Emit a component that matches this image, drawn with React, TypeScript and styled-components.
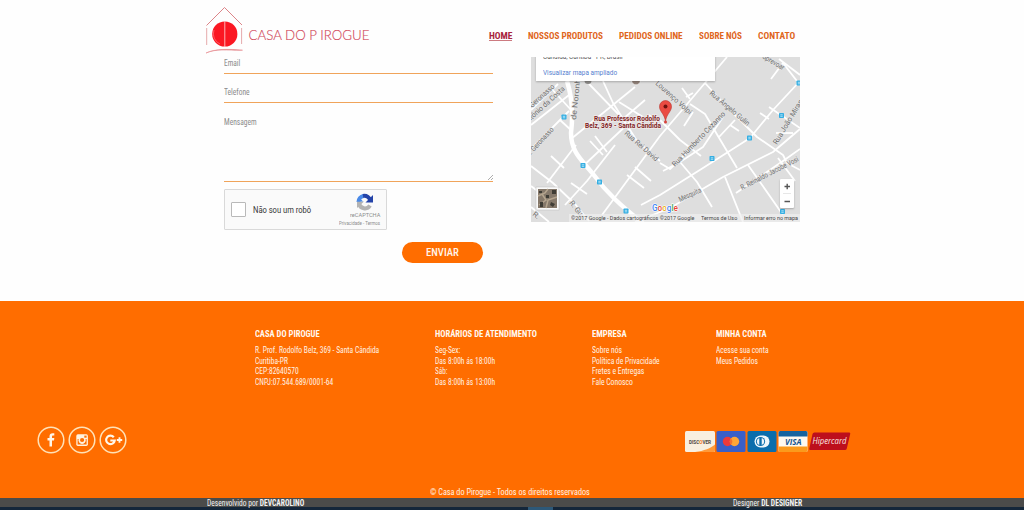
import React, { useLayoutEffect, useRef, useState } from "react";
import styled, { createGlobalStyle } from "styled-components";

const GlobalStyle = createGlobalStyle`
  * { box-sizing: border-box; }
  body { margin: 0; background: #fefefe; overflow: hidden; }
  body, button, input, textarea { font-family: "Roboto Condensed", Roboto, "Liberation Sans", sans-serif; }
  h3, p, ul { margin: 0; padding: 0; list-style: none; }
  a { color: inherit; text-decoration: none; }
  svg { display: block; }
`;

const FitBox = styled.span<{ $w: number }>`
  display: inline-block;
  width: ${(p) => p.$w}px;
  white-space: nowrap;
  vertical-align: top;
`;
const FitInner = styled.span`
  display: inline-block;
  transform-origin: 0 50%;
`;

/* Condenses a line of text to the given width. */
function Fit({ w, children }: { w: number; children: React.ReactNode }) {
  const ref = useRef<HTMLSpanElement>(null);
  const [scale, setScale] = useState(1);
  useLayoutEffect(() => {
    if (ref.current) setScale(w / ref.current.offsetWidth);
  }, [w]);
  return (
    <FitBox $w={w}>
      <FitInner ref={ref} style={{ transform: `scaleX(${scale})` }}>
        {children}
      </FitInner>
    </FitBox>
  );
}

const Page = styled.div`
  width: 1024px;
  height: 510px;
  display: flex;
  flex-direction: column;
  overflow: hidden;
`;

const Header = styled.header`
  height: 57px;
  flex: none;
  display: flex;
  padding-left: 204px;
`;
const Logo = styled.a`
  width: 285px;
  svg { overflow: visible; }
`;
const Nav = styled.nav`
  display: flex;
  gap: 16px;
  padding-top: 30px;
  font-size: 9.5px;
  font-weight: 700;
  line-height: 12px;
`;
const NavLink = styled.a<{ $active?: boolean }>`
  height: 11px;
  color: ${(p) => (p.$active ? "#a8243c" : "#e0661c")};
  border-bottom: 1px solid ${(p) => (p.$active ? "#cc7a80" : "transparent")};
`;

const Contact = styled.main`
  height: 244px;
  flex: none;
  display: flex;
  gap: 38px;
  padding-left: 224px;
`;
const Form = styled.form`
  width: 269px;
  display: flex;
  flex-direction: column;
  font-size: 8.4px;
  line-height: 10px;
  color: #8b8b8b;
`;
const Field = styled.label<{ $h: number; $top: number }>`
  display: flex;
  justify-content: space-between;
  height: ${(p) => p.$h}px;
  padding-top: ${(p) => p.$top}px;
  border-bottom: 1px solid #f0a45a;
`;
const Grip = styled.svg`
  align-self: flex-end;
  margin-bottom: 1px;
`;
const Captcha = styled.div`
  width: 163px;
  height: 41px;
  margin-top: 7px;
  padding-left: 6px;
  display: flex;
  align-items: center;
  background: #fafafa;
  border: 1px solid #d9d9d9;
  border-radius: 1px;
`;
const CheckBox = styled.span`
  width: 15px;
  height: 15px;
  margin: -1px 7px 0 0;
  border: 1px solid #b9b9b9;
  border-radius: 1px;
  background: #fff;
`;
const CaptchaLabel = styled.span`
  font-family: Roboto, sans-serif;
  font-size: 9px;
  color: #333;
`;
const CaptchaBrand = styled.div`
  flex: 1;
  display: flex;
  flex-direction: column;
  align-items: flex-end;
  padding: 1px 6px 0 0;
  font-family: Roboto, sans-serif;
  font-size: 5.8px;
  line-height: 8px;
  color: #8c8c8c;
  svg { margin-right: 6px; }
`;
const Submit = styled.button`
  width: 81px;
  height: 21px;
  margin: 12px 0 0 178px;
  border: 0;
  border-radius: 11px;
  background: #ff6d00;
  color: #fff4ea;
  font-size: 11px;
  line-height: 22px;
  font-weight: 500;
  padding: 0;
`;

const MapBox = styled.div`
  position: relative;
  width: 269px;
  height: 165px;
  overflow: hidden;
  background: #dedede;
  font-family: Roboto, sans-serif;
`;
const MapCard = styled.div`
  position: absolute;
  left: 5px;
  top: -6px;
  width: 179px;
  height: 30px;
  padding: 1px 0 0 7px;
  background: #fff;
  box-shadow: 0 1px 2px rgba(0, 0, 0, 0.25);
  font-size: 7.4px;
  line-height: 10px;
  color: #555;
`;
const MapLink = styled.a`
  display: block;
  margin-top: 6px;
  color: #5580cf;
`;
const ZoomControl = styled.div`
  position: absolute;
  left: 249px;
  top: 122px;
  width: 14px;
  height: 29px;
  background: #fff;
  border-radius: 1px;
  box-shadow: 0 1px 2px rgba(0, 0, 0, 0.25);
`;
const MapCredits = styled.div`
  position: absolute;
  left: 38px;
  right: 0;
  bottom: 0;
  height: 8px;
  padding-left: 2px;
  display: flex;
  gap: 7px;
  background: rgba(240, 240, 240, 0.7);
  font-size: 6px;
  line-height: 8px;
  color: #444;
`;

const Footer = styled.footer`
  height: 197px;
  flex: none;
  display: flex;
  flex-direction: column;
  background: #ff6d00;
  color: #fff3e6;
`;
const Columns = styled.div`
  display: flex;
  height: 129px;
  padding: 27px 0 0 255px;
`;
const Column = styled.section<{ $w: number }>`
  width: ${(p) => p.$w}px;
  font-size: 8.4px;
  line-height: 10.7px;
  h3 { font-size: 9.2px; line-height: 11px; font-weight: 700; margin-bottom: 6px; color: #fff8ef; }
  li { height: 10.7px; }
`;
const Brands = styled.div`
  display: flex;
  justify-content: space-between;
  padding: 0 173px 0 37px;
`;
const Social = styled.div`
  display: flex;
  gap: 3px;
  margin-top: -4px;
`;
const Cards = styled.div`
  display: flex;
  gap: 1px;
  height: 21px;
  margin-top: 1px;
`;
const Copyright = styled.p`
  margin: 33px 0 0 430px;
  font-size: 8.4px;
  line-height: 11px;
`;
const CreditBar = styled.div`
  height: 9px;
  flex: none;
  display: flex;
  gap: 429px;
  padding-left: 207px;
  background: #4b4b4a;
  color: #f2f2f2;
  font-size: 8.4px;
  line-height: 10px;
`;
const BottomEdge = styled.div`
  height: 3px;
  background: linear-gradient(90deg, #14263a 0 528px, #2d5878 528px 553px, #14263a 553px);
`;

const nav: [string, number][] = [
  ["HOME", 23],
  ["NOSSOS PRODUTOS", 75],
  ["PEDIDOS ONLINE", 64],
  ["SOBRE NÓS", 43],
  ["CONTATO", 37],
];

const columns: { title: [string, number]; w: number; items: [string, number][] }[] = [
  {
    title: ["CASA DO PIROGUE", 65],
    w: 180,
    items: [
      ["R. Prof. Rodolfo Belz, 369 - Santa Cândida", 124],
      ["Curitiba-PR", 33],
      ["CEP:82640570", 44],
      ["CNPJ:07.544.689/0001-64", 78],
    ],
  },
  {
    title: ["HORÁRIOS DE ATENDIMENTO", 102],
    w: 157,
    items: [
      ["Seg-Sex:", 25],
      ["Das 8:00h ás 18:00h", 60],
      ["Sáb:", 12],
      ["Das 8:00h ás 13:00h", 60],
    ],
  },
  {
    title: ["EMPRESA", 35],
    w: 124,
    items: [
      ["Sobre nós", 30],
      ["Política de Privacidade", 68],
      ["Fretes e Entregas", 52],
      ["Fale Conosco", 41],
    ],
  },
  {
    title: ["MINHA CONTA", 51],
    w: 80,
    items: [
      ["Acesse sua conta", 53],
      ["Meus Pedidos", 42],
    ],
  },
];

const streets = [
  "M0 53L27 27", "M0 68L38 38", "M19 30L41 54", "M0 92L29 63L41 74", "M29 63L38 54",
  "M0 109L22 126L44 147L58 164", "M16 126L45 88", "M20 99L33 111", "M40 82L104 30",
  "M58 27L92 62L101 79", "M72 24L82 46L106 84L129 104", "M88 45L112 60", "M92 62L114 43",
  "M0 129L16 141", "M40 126L56 137M34 148L56 124L84 88", "M59 84L72 98M64 79L76 95", "M50 111L100 64",
  "M196 0L174 26L129 79L71 158", "M174 26L196 50L214 68L226 80L242 91L252 98L256 106L269 113",
  "M151 31L159 42M155 40L162 36", "M129 63L149 83L170 99", "M128 68L118 58",
  "M159 47L174 57L184 74L206 111", "M192 60L172 90L149 105L132 114",
  "M0 150L18 165", "M96 118L113 131M104 110L120 124", "M129 106L139 112L170 82",
  "M110 148L129 138L172 111L219 81L242 53L269 24", "M104 165L139 151L192 120L242 95L269 72",
  "M149 105L166 125L181 150", "M194 120L212 165", "M217 108L229 125L252 158", "M205 136L252 104L269 92",
  "M238 50L269 71", "M229 56L238 62", "M240 22L252 6L269 28", "M248 2L269 18",
  "M247 101L264 124", "M245 76L262 76", "M199 68L208 74", "M153 69L162 55", "M188 80L204 63",
];

const streetNames: [string, number, number, number, number][] = [
  ["Geronasso", 1, 51, -42, 31],
  ["Antônio da Costa", -5, 68, -42, 53],
  ["de Noronha", 45, 63, -84, 46],
  ["R. Geronasso", -2, 100, -47, 37],
  ["Lourenço Volpi", 124, 27, 42, 46],
  ["Rua Ângelo Gulin", 178, 37, 40, 50],
  ["Sprevoar", 231, 1, 31, 24],
  ["Rua Rei David", 93, 77, 41, 42],
  ["Rua Humberto Cezanno", 144, 110, -46, 73],
  ["R. Reinaldo Jacobe Vosi", 211, 133, -27, 64],
  ["Rua João Mirand", 246, 88, -59, 55],
  ["Mesquita", 149, 145, -25, 24],
  ["R. Gu", 38, 146, 52, 17],
  ["R.", 1, 158, 38, 7],
];

const stops = [[33, 60], [52, 108.5], [68.5, 125], [95, 154], [181, 101.5], [218.5, 81], [250.5, 58.5], [268, 26], [251.5, 154.5]];

function MapPanel() {
  return (
    <MapBox>
      <svg width="269" height="165" viewBox="0 0 269 165">
        <rect width="269" height="165" fill="#dedede" />
        <g fill="none" stroke="#fff" strokeWidth="1.8" strokeLinejoin="round">
          {streets.map((d) => <path key={d} d={d} />)}
          <path strokeWidth="4.5" d="M36 24C41 40 42 60 40 76C40 96 52 104 62 117C76 136 90 149 112 166" />
        </g>
        <g fontSize="7.4" fill="#6f6f6f" stroke="#e4e4e4" strokeWidth="1.4" paintOrder="stroke">
          {streetNames.map(([t, x, y, r, w]) => (
            <text key={t} textLength={w} lengthAdjust="spacingAndGlyphs" transform={`translate(${x} ${y}) rotate(${r})`}>{t}</text>
          ))}
        </g>
        {stops.map(([x, y]) => (
          <g key={`${x}-${y}`}>
            <rect x={x - 2.5} y={y - 2.5} width="5" height="5" rx=".7" fill="#35aee2" />
            <path d={`M${x - 1.2} ${y - 0.7}h2.4M${x - 1.2} ${y + 0.8}h2.4`} stroke="#c8edfb" strokeWidth=".8" />
          </g>
        ))}
        <circle cx="57" cy="23.5" r="3.5" fill="#8d8b89" />
        <circle cx="105" cy="23.5" r="4.5" fill="#92837a" stroke="#eee" />
        <g fontSize="6.6" fontWeight="700" fill="#7f1f25" stroke="#f1e9e9" strokeWidth="1.4" paintOrder="stroke">
          <text x="63" y="64" textLength="66" lengthAdjust="spacingAndGlyphs">Rua Professor Rodolfo</text>
          <text x="54" y="71" textLength="76" lengthAdjust="spacingAndGlyphs">Belz, 369 - Santa Cândida</text>
        </g>
        <path d="M134.5 65C134 57 128.500 55 128.500 49.500a6 6 0 0 1 12 0C140.500 55 135 57 134.500 65Z" fill="#ea4b42" stroke="#b9332e" strokeWidth=".6" />
        <circle cx="134.500" cy="49.500" r="2" fill="#6e120f" />
        <circle cx="134.500" cy="65" r="1.500" fill="#d8433c" />
        <rect x="5" y="130" width="23" height="23" fill="#fafafa" stroke="#bbb" strokeWidth=".5" />
        <rect x="7" y="132" width="19" height="19" fill="#85786a" />
        <path d="M7 139l7-3 3-4M15 151l2-8 9-3M8 148l7-5-4-6" stroke="#b5a58f" strokeWidth="1.500" fill="none" />
        <path d="M9 145h3v5h-3zM15 138h3v3h-3zM21 133h4v4h-4zM20 145l4 2-2 3-3-2zM8 134h3v2h-3z" fill="#3f3c35" />
        <text x="121" y="153.500" fontSize="8.500" fontWeight="500" textLength="26" lengthAdjust="spacingAndGlyphs" stroke="#fff" strokeWidth="1.200" paintOrder="stroke">
          <tspan fill="#4285f4">G</tspan><tspan fill="#ea4335">o</tspan><tspan fill="#e9b21c">o</tspan><tspan fill="#4285f4">g</tspan><tspan fill="#34a853">l</tspan><tspan fill="#ea4335">e</tspan>
        </text>
      </svg>
      <MapCard>
        <Fit w={80}>Cândida, Curitiba - PR, Brasil</Fit>
        <MapLink><Fit w={74}>Visualizar mapa ampliado</Fit></MapLink>
      </MapCard>
      <ZoomControl>
        <svg width="14" height="29" viewBox="0 0 14 29" fill="none" stroke="#555" strokeWidth="1.400">
          <path d="M4.500 7.500h5.500M7.200 4.700v5.500M4.500 22.500h5.500" />
          <path d="M3 14.500h8" stroke="#ddd" strokeWidth=".7" />
        </svg>
      </ZoomControl>
      <MapCredits>
        <Fit w={123}>©2017 Google - Dados cartográficos ©2017 Google</Fit>
        <Fit w={36}>Termos de Uso</Fit>
        <Fit w={54}>Informar erro no mapa</Fit>
      </MapCredits>
    </MapBox>
  );
}

function PaymentCards() {
  return (
    <Cards>
      <svg width="30" height="21" viewBox="0 0 30 21">
        <rect width="30" height="21" rx="1.500" fill="#f8efe0" />
        <path d="M30 13.500V19.500a1.500 1.500 0 0 1-1.500 1.500H10C19 20 26 17 30 13.500Z" fill="#ff9a3a" />
        <text x="4" y="12.500" fontFamily="Roboto" fontWeight="700" fontSize="5" fill="#4c4640" textLength="22" lengthAdjust="spacingAndGlyphs">DISC<tspan fill="#f27a1a">O</tspan>VER</text>
      </svg>
      <svg width="30" height="21" viewBox="0 0 30 21">
        <rect x=".5" width="29" height="21" rx="1.500" fill="#3a5fc8" />
        <circle cx="11.500" cy="10.500" r="4.700" fill="#ee3a3a" />
        <circle cx="18.500" cy="10.500" r="4.700" fill="#ffa636" />
        <path d="M15 7.400a4.700 4.700 0 0 1 0 6.200a4.700 4.700 0 0 1 0-6.200Z" fill="#f4702f" />
      </svg>
      <svg width="30" height="21" viewBox="0 0 30 21">
        <rect x=".5" width="29" height="21" rx="1.500" fill="#0a6dac" />
        <path d="M13.500 4.500h3a6 6 0 0 1 0 12h-3a6 6 0 0 1 0-12Z" fill="#edf6fb" />
        <circle cx="13.500" cy="10.500" r="4.600" fill="#0a6dac" />
        <path d="M12.300 7a3.700 3.700 0 0 0 0 7ZM14.700 7a3.700 3.700 0 0 1 0 7Z" fill="#edf6fb" />
      </svg>
      <svg width="30" height="21" viewBox="0 0 30 21">
        <rect x=".5" width="29" height="21" rx="1.500" fill="#fff9ef" />
        <path d="M.5 5.500V1.500A1.500 1.500 0 0 1 2 0H28a1.500 1.500 0 0 1 1.500 1.500V5.500Z" fill="#15639f" />
        <path d="M.5 15.500V19.500A1.500 1.500 0 0 0 2 21H28a1.500 1.500 0 0 0 1.500-1.500V15.500Z" fill="#fb9a1c" />
        <text x="7" y="13.500" fontFamily="Open Sans" fontWeight="700" fontStyle="italic" fontSize="8.300" fill="#16558f" textLength="16.500" lengthAdjust="spacingAndGlyphs">VISA</text>
      </svg>
      <svg width="42" height="21" viewBox="0 0 42 21">
        <path d="M5.500 1.500H40a1.200 1.200 0 0 1 1.200 1.500L37.800 17.500a2 2 0 0 1-2 1.500H1.500a1.200 1.200 0 0 1-1.200-1.500L3.500 3a2 2 0 0 1 2-1.500Z" fill="#bd0f1c" />
        <text x="3.500" y="12.800" fontFamily="Open Sans" fontStyle="italic" fontWeight="500" fontSize="8.600" fill="#fbe9e3" textLength="34" lengthAdjust="spacingAndGlyphs">Hipercard</text>
      </svg>
    </Cards>
  );
}

function SocialIcons() {
  const ring = <circle cx="14" cy="14" r="12.800" fill="none" stroke="#ffe2b8" strokeWidth="1.500" />;
  return (
    <Social>
      <svg width="28" height="28" viewBox="0 0 28 28">
        {ring}
        <path d="M12.500 20.500v-6h-2v-2.400h2v-1.700c0-2.100 1.200-3.200 3.100-3.200h1.700v2.300h-1.100c-.9 0-1.200.4-1.200 1.200v1.400h2.300l-.3 2.400h-2v6Z" fill="#fff6e9" />
      </svg>
      <svg width="28" height="28" viewBox="0 0 28 28">
        {ring}
        <rect x="8.300" y="8.300" width="11.600" height="11.600" rx="1.600" fill="#fff2df" />
        <path d="M9.600 13v5.600h9V13h-1.300a3.500 3.500 0 1 1-6.400 0Z" fill="#ff6d00" />
        <circle cx="14.100" cy="14" r="3.400" fill="#fff2df" />
        <circle cx="14.100" cy="14" r="2.100" fill="#ff6d00" />
        <rect x="16.300" y="9.600" width="2.300" height="2.100" fill="#ff6d00" />
      </svg>
      <svg width="28" height="28" viewBox="0 0 28 28">
        {ring}
        <path d="M14.800 11.200a4.300 4.300 0 1 0 .9 3.300H11.300" fill="none" stroke="#fff6e9" strokeWidth="2.200" />
        <path d="M20.500 11.300v5.400M17.800 14h5.400" stroke="#fff6e9" strokeWidth="1.900" />
      </svg>
    </Social>
  );
}

export default function App() {
  return (
    <Page>
      <GlobalStyle />
      <Header>
        <Logo href="#">
          <svg width="180" height="57" viewBox="0 0 180 57">
            <path d="M2.500 25.500L20.500 7.500L38 25" fill="none" stroke="#dc8488" strokeWidth="1" />
            <path d="M2.700 28V45M37.600 28V44" stroke="#e3a0a3" strokeWidth=".9" />
            <path d="M2 53C12 48.500 22 50.500 38.500 50.200C25 49 12 48.500 2 53Z" fill="#e58a8e" stroke="#e58a8e" strokeWidth=".6" />
            <circle cx="20.800" cy="34" r="12.600" fill="#fb1722" />
            <path d="M10 30A11.200 11.200 0 0 0 16 44" fill="none" stroke="#ff8a8e" strokeWidth=".6" />
            <path d="M20.800 21V47" stroke="#ffc4c4" strokeWidth=".9" />
            <text x="44.500" y="39.800" fontFamily="Lato" fontWeight="300" fontSize="13.500" fill="#d2495b" stroke="#d2495b" strokeWidth=".15" textLength="121" lengthAdjust="spacingAndGlyphs">CASA DO P IROGUE</text>
          </svg>
        </Logo>
        <Nav>
          {nav.map(([label, w], i) => (
            <NavLink key={label} href="#" $active={i === 0}><Fit w={w}>{label}</Fit></NavLink>
          ))}
        </Nav>
      </Header>
      <Contact>
        <Form>
          <Field $h={17} $top={1}><Fit w={16}>Email</Fit></Field>
          <Field $h={29} $top={13}><Fit w={26}>Telefone</Fit></Field>
          <Field $h={79} $top={14}>
            <Fit w={33}>Mensagem</Fit>
            <Grip width="5" height="5" viewBox="0 0 5 5"><path d="M0 5L5 0M3 5L5 3" stroke="#888" strokeWidth=".7" /></Grip>
          </Field>
          <Captcha>
            <CheckBox />
            <CaptchaLabel><Fit w={58}>Não sou um robô</Fit></CaptchaLabel>
            <CaptchaBrand>
              <svg width="18" height="18" viewBox="0 0 18 18" fill="none">
                <path d="M2.500 9A6 6 0 0 1 7.500 3" stroke="#4a8ae8" strokeWidth="4" />
                <path d="M7 3A6.300 6.300 0 0 1 14.500 8" stroke="#2443a8" strokeWidth="4" />
                <path d="M17 2V9.500H9.500Z" fill="#2443a8" />
                <path d="M3 10.500A6 6 0 0 0 14 12.500" stroke="#b3b3b3" strokeWidth="4" />
                <path d="M1 8.500H8L1 15Z" fill="#b3b3b3" />
                <path d="M1 8.500H7L4 5Z" fill="#4a8ae8" />
              </svg>
              <Fit w={30}>reCAPTCHA</Fit>
              <Fit w={41}>Privacidade - Termos</Fit>
            </CaptchaBrand>
          </Captcha>
          <Submit type="button"><Fit w={33}>ENVIAR</Fit></Submit>
        </Form>
        <MapPanel />
      </Contact>
      <Footer>
        <Columns>
          {columns.map((c) => (
            <Column key={c.title[0]} $w={c.w}>
              <h3><Fit w={c.title[1]}>{c.title[0]}</Fit></h3>
              <ul>
                {c.items.map(([t, w]) => <li key={t}><Fit w={w}>{t}</Fit></li>)}
              </ul>
            </Column>
          ))}
        </Columns>
        <Brands>
          <SocialIcons />
          <PaymentCards />
        </Brands>
        <Copyright><Fit w={160}>© Casa do Pirogue - Todos os direitos reservados</Fit></Copyright>
      </Footer>
      <CreditBar>
        <Fit w={97}>Desenvolvido por <b>DEVCAROLINO</b></Fit>
        <Fit w={69}>Designer <b>DL DESIGNER</b></Fit>
      </CreditBar>
      <BottomEdge />
    </Page>
  );
}
